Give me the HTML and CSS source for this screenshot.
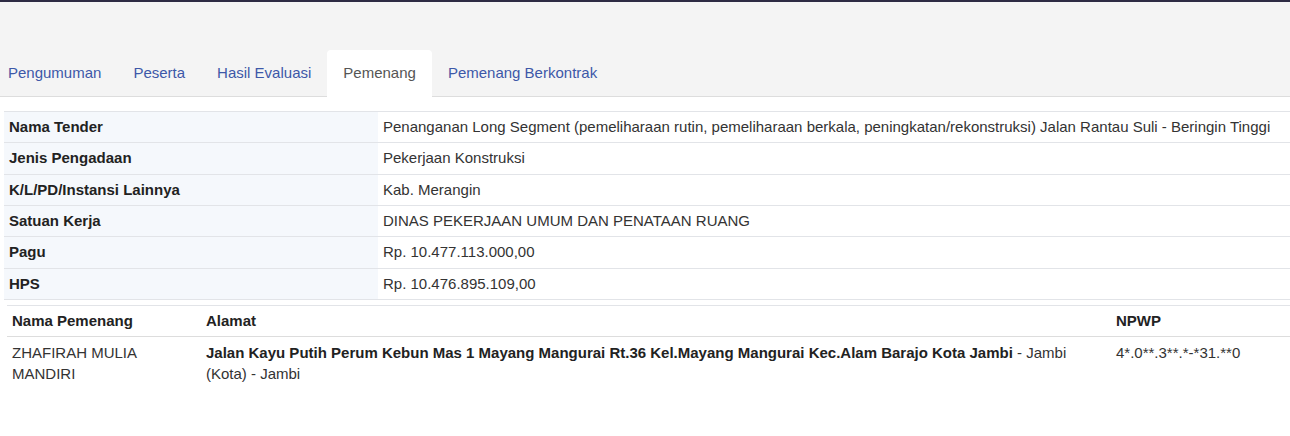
FILE: index.html
```html
<!DOCTYPE html>
<html>
<head>
<meta charset="utf-8">
<link rel="stylesheet" href="styles.css">
</head>
<body>
<div class="topbar"></div>
<div class="header">
  <ul class="tabs">
    <li class="tab"><a>Pengumuman</a></li>
    <li class="tab"><a>Peserta</a></li>
    <li class="tab"><a>Hasil Evaluasi</a></li>
    <li class="tab active"><a>Pemenang</a></li>
    <li class="tab"><a>Pemenang Berkontrak</a></li>
  </ul>
</div>
<div class="content">
  <table class="info">
    <tr><th>Nama Tender</th><td>Penanganan Long Segment (pemeliharaan rutin, pemeliharaan berkala, peningkatan/rekonstruksi) Jalan Rantau Suli - Beringin Tinggi</td></tr>
    <tr><th>Jenis Pengadaan</th><td>Pekerjaan Konstruksi</td></tr>
    <tr><th>K/L/PD/Instansi Lainnya</th><td>Kab. Merangin</td></tr>
    <tr><th>Satuan Kerja</th><td>DINAS PEKERJAAN UMUM DAN PENATAAN RUANG</td></tr>
    <tr><th>Pagu</th><td>Rp. 10.477.113.000,00</td></tr>
    <tr><th>HPS</th><td>Rp. 10.476.895.109,00</td></tr>
  </table>
  <table class="winner">
    <thead>
      <tr><th class="c1">Nama Pemenang</th><th class="c2">Alamat</th><th class="c3">NPWP</th></tr>
    </thead>
    <tbody>
      <tr><td>ZHAFIRAH MULIA MANDIRI</td><td><b>Jalan Kayu Putih Perum Kebun Mas 1 Mayang Mangurai Rt.36 Kel.Mayang Mangurai Kec.Alam Barajo Kota Jambi</b> - Jambi (Kota) - Jambi</td><td>4*.0**.3**.*-*31.**0</td></tr>
    </tbody>
  </table>
</div>
</body>
</html>
```
FILE: styles.css
```css
* { box-sizing: border-box; }
html, body {
  margin: 0;
  padding: 0;
  background: #fff;
  font-family: "Liberation Sans", Arial, sans-serif;
  font-size: 15px;
  color: #333;
}
.topbar {
  height: 2px;
  background: #2e2b44;
}
.header {
  background: #f4f4f4;
  padding-top: 48px;
  border-bottom: 1px solid #dddddd;
}
.tabs {
  list-style: none;
  margin: 0 0 -1px -8px;
  padding: 0;
  display: flex;
}
.tab a {
  display: block;
  padding: 13px 16px 14px;
  line-height: 20px;
  color: #3d58a8;
  border-radius: 4px 4px 0 0;
}
.tab.active a {
  background: #fff;
  color: #555;
}
.content {
  padding: 14px 0 0 4px;
}
table {
  border-collapse: collapse;
  width: 100%;
}
.info th, .info td {
  border-top: 1px solid #e2e4e8;
  padding: 5px 5px;
  height: 31.33px;
  line-height: 20px;
  text-align: left;
  vertical-align: middle;
}
.info tr:last-child th, .info tr:last-child td {
  border-bottom: 1px solid #e2e4e8;
}
.info th {
  width: 374px;
  background: #f5f8fc;
  font-weight: bold;
  color: #222;
}
.info td {
  color: #333;
}
.winner {
  margin: 5px 0 0 3px;
  width: calc(100% - 3px);
}
.winner th, .winner td {
  padding: 5px 5px;
  line-height: 21px;
  text-align: left;
  vertical-align: top;
}
.winner th {
  border-top: 1px solid #e2e4e8;
  border-bottom: 1px solid #dddddd;
  font-weight: bold;
  color: #222;
  line-height: 20px;
}
.winner td {
  color: #333;
}
.winner td b { color: #222; }
.c1 { width: 194px; }
.c2 { width: 910px; }
```
